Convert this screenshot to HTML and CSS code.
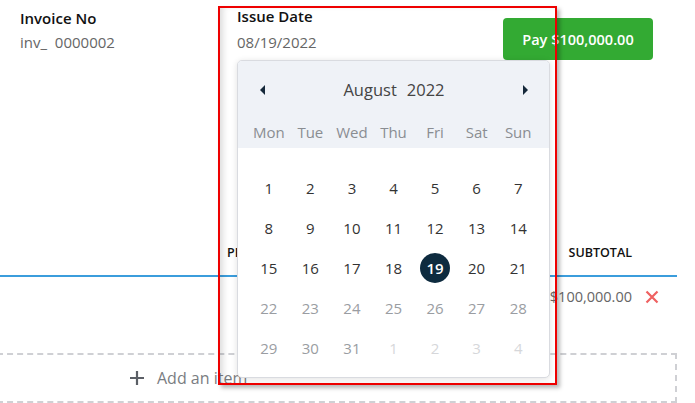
FILE: index.html
```html
<!DOCTYPE html>
<html>
<head>
<meta charset="utf-8">
<link rel="stylesheet" href="styles.css">
</head>
<body>
<div class="page">
  <div class="top">
    <div class="field invoice">
      <div class="label">Invoice No</div>
      <div class="value">inv_&nbsp; 0000002</div>
    </div>
    <div class="field issue">
      <div class="label">Issue Date</div>
      <div class="value">08/19/2022</div>
    </div>
    <button class="pay">Pay $100,000.00</button>
  </div>

  <div class="items">
    <div class="thead">
      <span class="th-price">PRICE</span>
      <span class="th-sub">SUBTOTAL</span>
      <span></span>
    </div>
    <div class="row">
      <span></span>
      <span class="amount">$100,000.00</span>
      <span class="del">
        <svg width="14" height="14" viewBox="0 0 14 14"><path d="M1.5 1.5 L12.5 12.5 M12.5 1.5 L1.5 12.5" stroke="#ef6161" stroke-width="2.2" fill="none"/></svg>
      </span>
    </div>
    <div class="add">
      <svg class="plus" width="16" height="16" viewBox="0 0 16 16"><path d="M8 1 V15 M1 8 H15" stroke="#5b5f66" stroke-width="2.2" fill="none"/></svg>
      <span>Add an item</span>
    </div>
  </div>

  <div class="calendar">
    <div class="cal-head">
      <div class="month-row">
        <span class="arrow left"></span>
        <span class="month">August<span class="year">2022</span></span>
        <span class="arrow right"></span>
      </div>
      <div class="weekdays">
        <span>Mon</span><span>Tue</span><span>Wed</span><span>Thu</span><span>Fri</span><span>Sat</span><span>Sun</span>
      </div>
    </div>
    <div class="days">
      <span>1</span><span>2</span><span>3</span><span>4</span><span>5</span><span>6</span><span>7</span>
      <span>8</span><span>9</span><span>10</span><span>11</span><span>12</span><span>13</span><span>14</span>
      <span>15</span><span>16</span><span>17</span><span>18</span><span class="sel"><b>19</b></span><span>20</span><span>21</span>
      <span class="dis">22</span><span class="dis">23</span><span class="dis">24</span><span class="dis">25</span><span class="dis">26</span><span class="dis">27</span><span class="dis">28</span>
      <span class="dis">29</span><span class="dis">30</span><span class="dis">31</span><span class="out">1</span><span class="out">2</span><span class="out">3</span><span class="out">4</span>
    </div>
  </div>

  <div class="highlight"></div>
</div>
</body>
</html>
```

FILE: styles.css
```css
* { box-sizing: border-box; }
html, body { margin: 0; padding: 0; background: #fff; overflow: hidden; }
body {
  font-family: "Open Sans", "Noto Sans", sans-serif;
  color: #222;
  width: 695px;
  height: 403px;
}
.page { position: relative; width: 695px; height: 403px; }

.top {
  display: flex;
  align-items: flex-start;
  height: 60px;
  padding-left: 20px;
}
.field { padding-top: 8px; }
.invoice { width: 217px; }
.issue { flex: 1; padding-top: 6px; }
.label {
  font-size: 15px;
  font-weight: 600;
  line-height: 20px;
  color: #111;
}
.value {
  margin-top: 4px;
  font-size: 15px;
  line-height: 20px;
  color: #666;
}
.issue .value { margin-top: 6px; }
.pay {
  margin-top: 18px;
  margin-right: 42px;
  width: 150px;
  height: 42px;
  border: none;
  border-radius: 4px;
  background: #33aa33;
  color: #fff;
  font-family: inherit;
  font-size: 14.5px;
  font-weight: 600;
}

.items { width: 677px; margin-top: 180px; }
.thead {
  display: grid;
  grid-template-columns: 227px 1fr auto 45px;
  padding: 4px 0 13px;
  border-bottom: 2px solid #3b9ddc;
  font-size: 12.5px;
  font-weight: 600;
  line-height: 18px;
  color: #111;
}
.th-price { grid-column: 2; }
.th-sub { grid-column: 3; }
.row {
  display: grid;
  grid-template-columns: 1fr auto 45px;
  height: 64px;
  padding-top: 10px;
  align-items: start;
  font-size: 14.5px;
  line-height: 20px;
  color: #666;
}
.del { display: flex; justify-content: flex-end; padding: 3px 18px 0 0; }
.add {
  margin-top: 12px;
  margin-left: -3px;
  width: calc(100% + 3px);
  height: 50px;
  border: 2px dashed #cfd0d4;
  display: flex;
  align-items: center;
  padding-left: 130px;
  gap: 12px;
  font-size: 16px;
  color: #7a7d82;
}

.calendar {
  position: absolute;
  left: 237px;
  top: 60px;
  width: 313px;
  height: 318px;
  border: 1px solid #d9dbe0;
  border-radius: 5px;
  background: #fff;
  overflow: hidden;
  box-shadow: 0 1px 6px rgba(0,0,0,0.12);
}
.cal-head {
  background: #eff2f7;
  height: 87px;
  display: grid;
  grid-template-rows: 57px 30px;
  padding: 0 10px;
}
.month-row {
  display: flex;
  align-items: center;
  justify-content: space-between;
  padding: 0 11px 0 12px;
}
.month { font-size: 16.5px; color: #444; }
.year { margin-left: 10px; }
.arrow { width: 0; height: 0; border-top: 5px solid transparent; border-bottom: 5px solid transparent; }
.arrow.left { border-right: 5px solid #15283a; }
.arrow.right { border-left: 5px solid #15283a; }
.weekdays, .days {
  display: grid;
  grid-template-columns: repeat(7, 1fr);
  text-align: center;
}
.weekdays { align-items: center; font-size: 15px; color: #8a8d92; padding-bottom: 2px; }
.days {
  padding: 20px 10px 0;
  grid-auto-rows: 40px;
  align-items: center;
  justify-items: center;
  font-size: 15px;
  color: #333;
}
.days .dis { color: #9a9da2; }
.days .out { color: #d6d7da; }
.sel b {
  display: flex;
  align-items: center;
  justify-content: center;
  width: 30px;
  height: 30px;
  border-radius: 50%;
  background: #0e2b3f;
  color: #fff;
  font-weight: 600;
}

.highlight {
  position: absolute;
  left: 218px;
  top: 6px;
  width: 339px;
  height: 379px;
  border: 2px solid #ee0000;
  pointer-events: none;
  box-shadow: 3px 3px 4px rgba(0,0,0,0.28), inset 6px 0 6px -3px rgba(0,0,0,0.14);
}
```
